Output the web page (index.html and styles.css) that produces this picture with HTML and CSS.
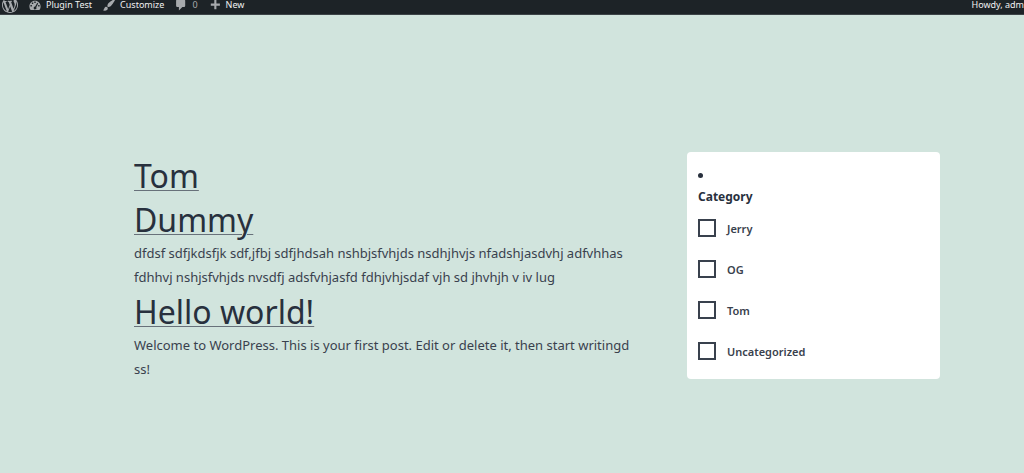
FILE: index.html
```
<!DOCTYPE html>
<html lang="en">
<head>
    <meta charset="UTF-8">
    <meta name="viewport" content="width=device-width, initial-scale=1.0">
    <title>Plugin Test</title>
    <link rel="stylesheet" href="styles.css">
</head>
<body>

<nav class="admin-bar">
    <a href="#" class="bar-item logo" aria-label="About WordPress">
        <svg viewBox="0 0 20 20"><path d="M20 10c0-5.51-4.49-10-10-10C4.48 0 0 4.49 0 10c0 5.52 4.48 10 10 10 5.51 0 10-4.48 10-10zM7.78 15.37L4.37 6.22c.55-.02 1.17-.08 1.17-.08.5-.06.44-1.13-.06-1.11 0 0-1.45.11-2.37.11-.18 0-.37 0-.58-.01C4.12 2.69 6.87 1.11 10 1.11c2.33 0 4.45.87 6.05 2.34-.68-.11-1.65.39-1.65 1.58 0 .74.45 1.36.9 2.1.35.61.55 1.36.55 2.46 0 1.49-1.4 5-1.4 5l-3.03-8.37c.54-.02.82-.17.82-.17.5-.05.44-1.25-.06-1.22 0 0-1.44.12-2.38.12-.87 0-2.33-.12-2.33-.12-.5-.03-.56 1.2-.06 1.22l.92.08 1.26 3.41zM17.41 10c.24-.64.74-1.87.43-4.25.7 1.29 1.05 2.71 1.05 4.25 0 3.29-1.73 6.24-4.4 7.78.97-2.59 1.94-5.2 2.92-7.78zM6.1 18.09C3.12 16.65 1.11 13.53 1.11 10c0-1.3.23-2.48.72-3.59C3.25 10.3 4.67 14.2 6.1 18.09zm4.03-6.63l2.58 6.98c-.86.29-1.76.45-2.71.45-.79 0-1.57-.11-2.29-.33.81-2.38 1.62-4.74 2.42-7.1z"/></svg>
    </a>
    <a href="#" class="bar-item">
        <svg viewBox="0 0 20 20"><path fill-rule="evenodd" d="M3.76 17h12.48c1.1-1.37 1.76-3.11 1.76-5 0-4.42-3.58-8-8-8s-8 3.58-8 8c0 1.89.66 3.63 1.76 5zM9 5h2v2H9zM5.5 6.5h2v2h-2zM3.5 10h2v2h-2zM14.5 10h2v2h-2zM13.3 6.8l1.2.9-2.7 5.5a2 2 0 1 1-1.5-.9z"/></svg>
        <span>Plugin Test</span>
    </a>
    <a href="#" class="bar-item">
        <svg viewBox="0 0 20 20"><path d="M18.33 3.57s.27-.8-.31-1.36c-.53-.52-1.22-.24-1.22-.24-.61.3-5.76 3.47-7.67 5.57-.86.96-2.06 3.79-1.09 4.82.92.98 3.96-.17 4.79-1 2.06-2.06 5.21-7.17 5.5-7.79zM1.4 17.65c2.37-1.56 1.46-3.41 3.23-4.64.93-.65 2.22-.62 3.08.29.63.67.8 2.57-.16 3.46-1.57 1.45-4 1.55-6.15.89z"/></svg>
        <span>Customize</span>
    </a>
    <a href="#" class="bar-item comments">
        <svg viewBox="0 0 20 20"><path d="M5 2h9c1.1 0 2 .9 2 2v7c0 1.1-.9 2-2 2h-2l-5 5v-5H5c-1.1 0-2-.9-2-2V4c0-1.1.9-2 2-2z"/></svg>
        <span>0</span>
    </a>
    <a href="#" class="bar-item">
        <svg viewBox="0 0 20 20"><path d="M17 8v3h-5v5H9v-5H4V8h5V3h3v5h5z"/></svg>
        <span>New</span>
    </a>
    <a href="#" class="bar-item account">Howdy, adm</a>
</nav>

<div class="site">
    <main class="posts">
        <article>
            <h2><a href="#">Tom</a></h2>
        </article>
        <article>
            <h2><a href="#">Dummy</a></h2>
            <p>dfdsf sdfjkdsfjk sdf,jfbj sdfjhdsah nshbjsfvhjds nsdhjhvjs nfadshjasdvhj adfvhhas fdhhvj nshjsfvhjds nvsdfj adsfvhjasfd fdhjvhjsdaf vjh sd jhvhjh v iv lug</p>
        </article>
        <article>
            <h2><a href="#">Hello world!</a></h2>
            <p>Welcome to WordPress. This is your first post. Edit or delete it, then start writingd ss!</p>
        </article>
    </main>

    <aside>
        <form class="filter">
            <ul class="marker"><li></li></ul>
            <h3>Category</h3>
            <div class="option">
                <input type="checkbox" id="cat-jerry">
                <label for="cat-jerry">Jerry</label>
            </div>
            <div class="option">
                <input type="checkbox" id="cat-og">
                <label for="cat-og">OG</label>
            </div>
            <div class="option">
                <input type="checkbox" id="cat-tom">
                <label for="cat-tom">Tom</label>
            </div>
            <div class="option">
                <input type="checkbox" id="cat-uncategorized">
                <label for="cat-uncategorized">Uncategorized</label>
            </div>
        </form>
    </aside>
</div>

</body>
</html>
```
FILE: styles.css
```
body {
    margin: 0;
    background-color: #d1e4dd;
    color: #39414d;
    font-family: "Segoe UI", "Noto Sans", sans-serif;
    font-size: 13px;
    line-height: 24px;
}

/* Admin bar */
.admin-bar {
    display: flex;
    align-items: center;
    height: 14px;
    padding-left: 2px;
    border-bottom: 1px solid #3c4347;
    background-color: #1d2327;
    font-size: 9px;
    line-height: 12px;
    white-space: nowrap;
    overflow: hidden;
}
.bar-item {
    display: flex;
    align-items: center;
    gap: 4px;
    height: 14px;
    margin-right: 10px;
    padding-bottom: 5px;
    color: #f0f0f1;
    text-decoration: none;
}
.bar-item svg {
    width: 14px;
    height: 14px;
    fill: #a7aaad;
}
.logo svg {
    width: 16px;
    height: 16px;
}
.comments {
    color: #a7aaad;
}
.account {
    margin-left: auto;
    margin-right: 0;
}

.site {
    display: flex;
    align-items: flex-start;
    gap: 48px;
    padding: 137px 84px 40px 134px;
}

.posts {
    flex: 1;
    padding-top: 1px;
}
.posts h2 {
    margin: 0;
    padding-top: 2px;
    font-size: 32px;
    font-weight: 400;
    line-height: 42px;
}
.posts h2 a {
    color: #28303d;
    text-decoration-color: #68717a;
    text-decoration-thickness: 1px;
    text-underline-offset: 2px;
}
.posts p {
    margin: 0;
}

aside {
    flex: 0 0 253px;
}
.filter {
    padding: 12px 11px 11px;
    border-radius: 4px;
    background-color: #fff;
}
.marker {
    margin: 0;
    padding: 0;
    color: #28303d;
    font-size: 14px;
    list-style: disc inside;
}
.filter h3 {
    margin: 0 0 12px;
    color: #28303d;
    font-size: 12px;
    font-weight: 700;
    line-height: 18px;
}
.option {
    display: flex;
    align-items: center;
    gap: 11px;
    margin-bottom: 21px;
}
.option:last-child {
    margin-bottom: 7px;
}
.option input {
    appearance: none;
    width: 18px;
    height: 18px;
    margin: 0;
    border: 2px solid #39414d;
    background-color: #fff;
}
.option input:checked {
    background-color: #39414d;
}
.option label {
    padding-top: 2px;
    font-size: 11px;
    font-weight: 600;
    line-height: 18px;
}
```
